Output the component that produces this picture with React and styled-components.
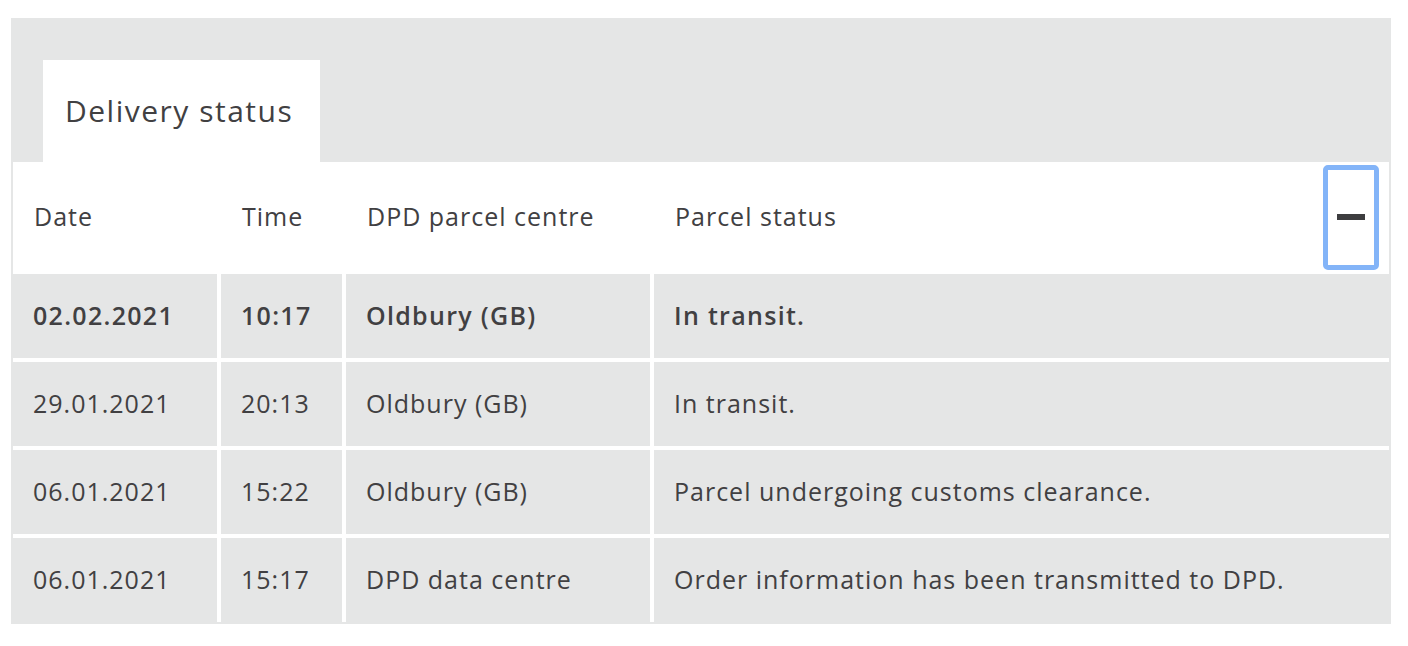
import React from "react";
import styled, { createGlobalStyle } from "styled-components";

const Global = createGlobalStyle`
  html, body { margin: 0; padding: 0; background: #ffffff; }
  body { font-family: "Open Sans", "Liberation Sans", sans-serif; color: #414042; }
`;

const Panel = styled.section`
  margin: 18px 17px 0 11px;
  background: #e5e6e6;
  padding: 42px 2px 2px 2px;
`;

const Tabs = styled.div`
  display: flex;
  padding-left: 30px;
`;

const Tab = styled.div`
  width: 277px;
  height: 102px;
  box-sizing: border-box;
  background: #ffffff;
  display: flex;
  align-items: center;
  padding: 0 0 2px 22px;
  font-size: 30px;
  letter-spacing: 1.5px;
  color: #414042;
`;

const Table = styled.div`
  background: #ffffff;
  display: flex;
  flex-direction: column;
  gap: 4px;
`;

const cols = "204px 121px 304px 1fr";

const HeaderRow = styled.div`
  display: grid;
  grid-template-columns: ${cols};
  column-gap: 4px;
  height: 108px;
  align-items: center;
  background: #ffffff;
`;

const HeaderCell = styled.div`
  padding-left: 21px;
  font-size: 25px;
  letter-spacing: 1px;
  color: #414042;
  display: flex;
  align-items: center;
  justify-content: space-between;
`;

const Row = styled.div`
  display: grid;
  grid-template-columns: ${cols};
  column-gap: 4px;
  height: 84px;
`;

const Cell = styled.div`
  background: #e5e6e6;
  display: flex;
  align-items: center;
  padding: 0 0 3px 20px;
  font-size: 25px;
  letter-spacing: ${(p) => (p.$bold ? "1.3px" : "1px")};
  font-weight: ${(p) => (p.$bold ? 600 : 400)};
  color: #414042;
`;

const ToggleButton = styled.button`
  width: 56px;
  height: 105px;
  margin-right: 10px;
  margin-top: 2px;
  box-sizing: border-box;
  border: 5px solid #83b4f8;
  border-radius: 5px;
  background: #ffffff;
  display: flex;
  align-items: center;
  justify-content: center;
  padding: 0;
  cursor: pointer;
`;

const Dash = styled.span`
  display: block;
  width: 28px;
  height: 6px;
  background: #3d3d3f;
`;

const rows = [
  ["02.02.2021", "10:17", "Oldbury (GB)", "In transit."],
  ["29.01.2021", "20:13", "Oldbury (GB)", "In transit."],
  ["06.01.2021", "15:22", "Oldbury (GB)", "Parcel undergoing customs clearance."],
  ["06.01.2021", "15:17", "DPD data centre", "Order information has been transmitted to DPD."],
];

export default function App() {
  return (
    <>
      <Global />
      <Panel>
        <Tabs>
          <Tab>Delivery status</Tab>
        </Tabs>
        <Table>
          <HeaderRow>
            <HeaderCell>Date</HeaderCell>
            <HeaderCell>Time</HeaderCell>
            <HeaderCell>DPD parcel centre</HeaderCell>
            <HeaderCell>
              Parcel status
              <ToggleButton aria-label="Collapse">
                <Dash />
              </ToggleButton>
            </HeaderCell>
          </HeaderRow>
          {rows.map((r, i) => (
            <Row key={i}>
              {r.map((c, j) => (
                <Cell key={j} $bold={i === 0}>
                  {c}
                </Cell>
              ))}
            </Row>
          ))}
        </Table>
      </Panel>
    </>
  );
}
